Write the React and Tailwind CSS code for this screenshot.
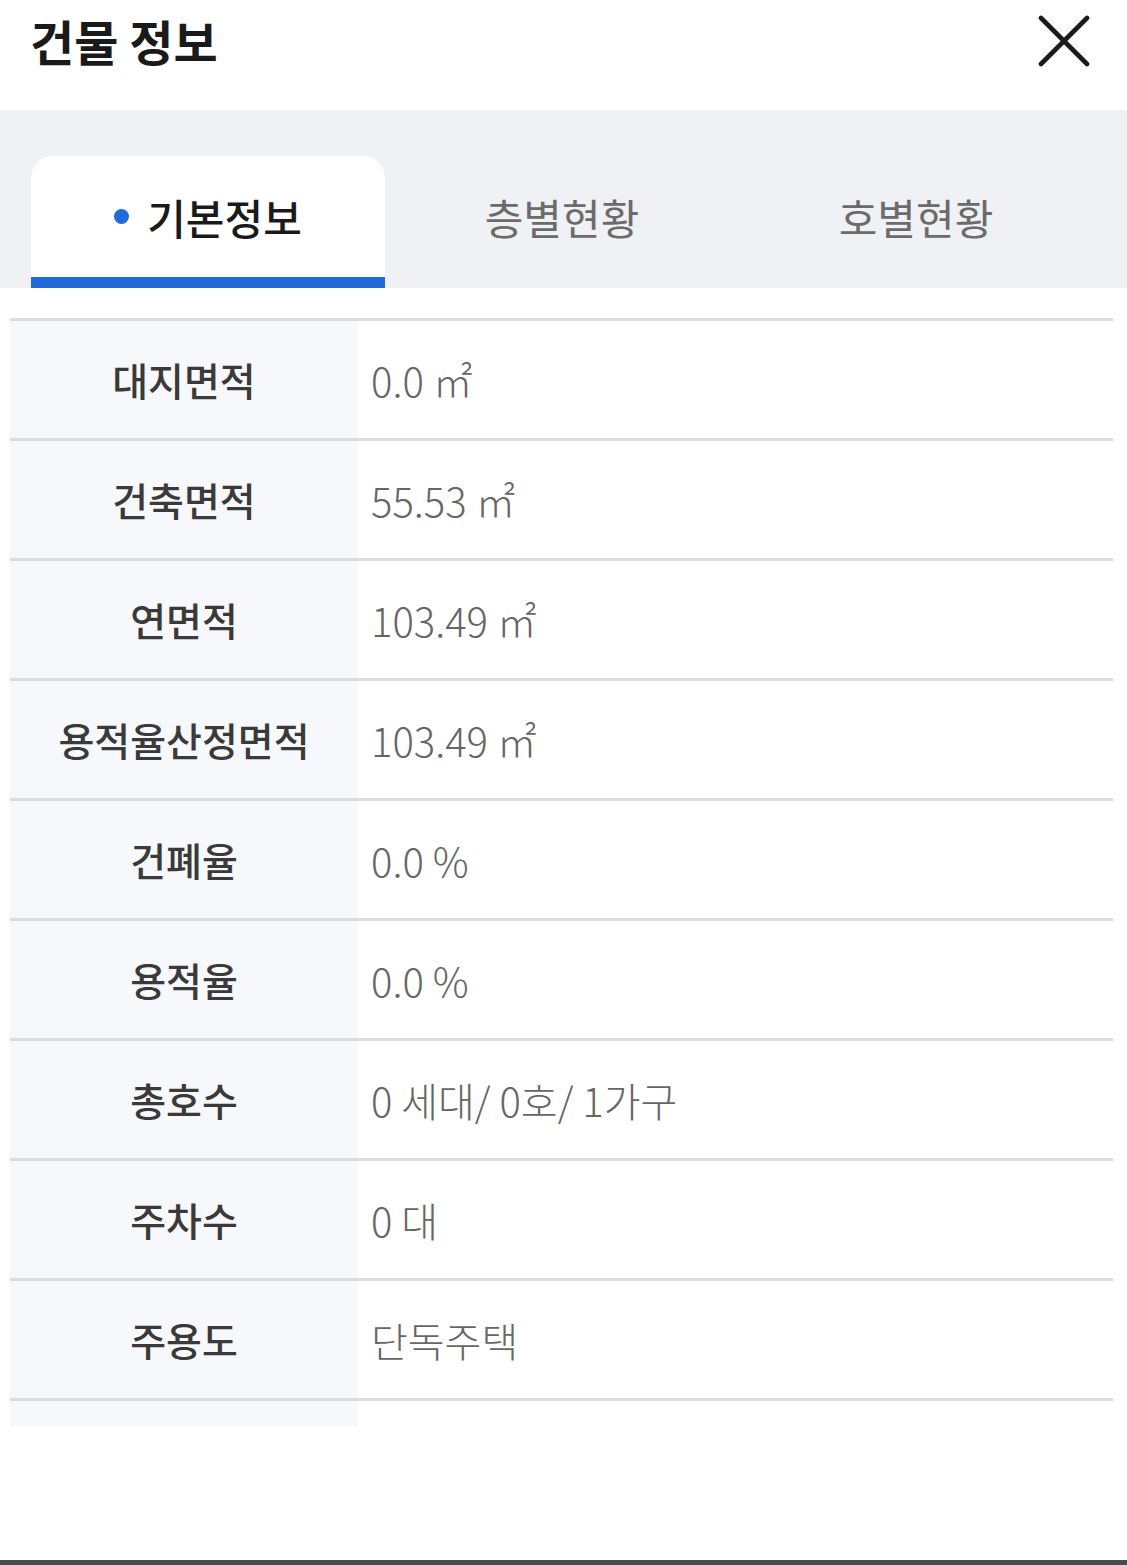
const rows = [
  ["대지면적", "0.0 ㎡"],
  ["건축면적", "55.53 ㎡"],
  ["연면적", "103.49 ㎡"],
  ["용적율산정면적", "103.49 ㎡"],
  ["건폐율", "0.0 %"],
  ["용적율", "0.0 %"],
  ["총호수", "0 세대/ 0호/ 1가구"],
  ["주차수", "0 대"],
  ["주용도", "단독주택"],
];

const tabs = ["기본정보", "층별현황", "호별현황"];

export default function App() {
  return (
    <div
      className="w-[1127px] h-[1565px] bg-white flex flex-col"
      style={{ fontFamily: '"Noto Sans CJK KR", "Noto Sans", sans-serif' }}
    >
      {/* Header */}
      <div className="h-[110px] flex items-start justify-between pl-[30px] pr-[37px]">
        <h1 className="text-[48px] leading-none font-bold text-[#1a1a1a] mt-[16px]">건물 정보</h1>
        <button className="mt-[15px] text-[#1a1a1a]">
          <svg width="52" height="52" viewBox="0 0 52 52" fill="none" stroke="currentColor" strokeWidth="4.6" strokeLinecap="round">
            <path d="M3 3 L49 49 M49 3 L3 49" />
          </svg>
        </button>
      </div>

      {/* Tabs */}
      <div className="h-[178px] bg-[#eff1f4] flex items-end px-[31px]">
        {tabs.map((t, i) =>
          i === 0 ? (
            <div
              key={t}
              className="w-[354px] h-[132px] bg-white rounded-t-[22px] border-b-[11px] border-[#1e6bdb] flex items-center justify-center gap-[18px]"
            >
              <span className="w-[15px] h-[15px] rounded-full bg-[#1e6bdb]" />
              <span className="text-[42px] font-medium text-[#1a1a1a] leading-none">{t}</span>
            </div>
          ) : (
            <div key={t} className="w-[354px] h-[132px] flex items-center justify-center pb-[10px]">
              <span className="text-[42px] text-[#6b6b6b] leading-none">{t}</span>
            </div>
          )
        )}
      </div>

      {/* Table */}
      <div className="mt-[30px] mx-[10px] w-[1103px]">
        {rows.map(([label, value]) => (
          <div key={label} className="flex h-[120px] border-t-[3px] border-[#dcdcdf]">
            <div className="w-[348px] bg-[#f7f8fb] flex items-center justify-center">
              <span className="text-[39px] font-medium text-[#3a3a3a] leading-none">{label}</span>
            </div>
            <div className="flex-1 flex items-center pl-[13px]">
              <span className="text-[40px] font-light text-[#666] leading-none">{value}</span>
            </div>
          </div>
        ))}
        <div className="flex h-[28px] border-t-[3px] border-[#dcdcdf]">
          <div className="w-[348px] bg-[#f7f8fb]" />
        </div>
      </div>

      <div className="flex-1" />
      <div className="h-[5px] bg-[#4a4a4a]" />
    </div>
  );
}
